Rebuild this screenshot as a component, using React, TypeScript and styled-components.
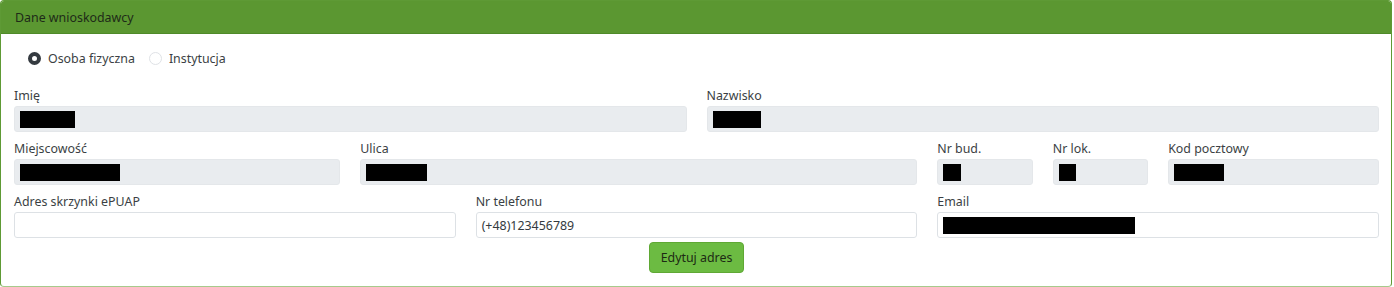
import styled, { createGlobalStyle } from 'styled-components'

const GlobalStyle = createGlobalStyle`
  html, body {
    margin: 0;
    padding: 0;
    background: #ffffff;
  }
  body {
    font-family: 'Noto Sans', 'Open Sans', sans-serif;
    font-size: 12.4px;
    color: #212529;
  }
`

const Card = styled.section`
  width: 1392px;
  height: 287px;
  box-sizing: border-box;
  border: 1px solid #5e9a35;
  border-bottom-color: #a6ca8c;
  border-radius: 4px;
  overflow: hidden;
  display: flex;
  flex-direction: column;
`

const Header = styled.div`
  height: 32px;
  flex: none;
  background: #5b9731;
  border-bottom: 1px solid #4f8a29;
  display: flex;
  align-items: center;
  padding: 0 14px;
  font-size: 12.4px;
  color: #1e2a18;
`

const Body = styled.div`
  padding: 13px 12px 0 13px;
  display: flex;
  flex-direction: column;
`

const RadioRow = styled.div`
  display: flex;
  align-items: center;
  gap: 14px;
  padding-left: 14px;
  height: 22px;
  margin-bottom: 19px;
`

const RadioLabel = styled.label`
  display: flex;
  align-items: center;
  gap: 7px;
  color: #3b3f44;
`

const RadioDot = styled.span<{ $checked?: boolean }>`
  width: 13px;
  height: 13px;
  box-sizing: border-box;
  border-radius: 50%;
  border: ${({ $checked }) => ($checked ? '4px solid #343a40' : '1px solid #dfe2e6')};
  background: #ffffff;
`

const Grid = styled.div`
  display: grid;
  grid-template-columns: repeat(12, 1fr);
  column-gap: 20px;
  row-gap: 9px;
`

const Field = styled.div<{ $span: number }>`
  grid-column: span ${({ $span }) => $span};
  display: flex;
  flex-direction: column;
`

const Label = styled.span`
  line-height: 16px;
  color: #3b3f44;
  margin-bottom: 2px;
`

const Input = styled.div<{ $disabled?: boolean }>`
  height: 26px;
  box-sizing: border-box;
  border: 1px solid ${({ $disabled }) => ($disabled ? '#e4e7ea' : '#dde1e5')};
  border-radius: 3px;
  background: ${({ $disabled }) => ($disabled ? '#e9ecef' : '#ffffff')};
  display: flex;
  align-items: center;
  padding: 0 7px 0 5px;
  color: #343a40;
`

const Redacted = styled.span<{ $w: number }>`
  display: block;
  width: ${({ $w }) => $w}px;
  height: 17px;
  background: #000000;
`

const Actions = styled.div`
  display: flex;
  justify-content: center;
  padding-top: 4px;
`

const Button = styled.button`
  width: 95px;
  height: 31px;
  box-sizing: border-box;
  border: 1px solid #5fa834;
  border-radius: 4px;
  background: #6cbb42;
  color: #1d2a14;
  font-family: inherit;
  font-size: 12.4px;
  cursor: pointer;
`

type FieldDef = {
  label: string
  span: number
  disabled?: boolean
  hidden?: number
  value?: string
}

const fields: FieldDef[] = [
  { label: 'Imię', span: 6, disabled: true, hidden: 55 },
  { label: 'Nazwisko', span: 6, disabled: true, hidden: 48 },
  { label: 'Miejscowość', span: 3, disabled: true, hidden: 100 },
  { label: 'Ulica', span: 5, disabled: true, hidden: 61 },
  { label: 'Nr bud.', span: 1, disabled: true, hidden: 18 },
  { label: 'Nr lok.', span: 1, disabled: true, hidden: 17 },
  { label: 'Kod pocztowy', span: 2, disabled: true, hidden: 50 },
  { label: 'Adres skrzynki ePUAP', span: 4 },
  { label: 'Nr telefonu', span: 4, value: '(+48)123456789' },
  { label: 'Email', span: 4, hidden: 192 },
]

export default function App() {
  return (
    <>
      <GlobalStyle />
      <Card>
        <Header>Dane wnioskodawcy</Header>
        <Body>
          <RadioRow>
            <RadioLabel>
              <RadioDot $checked />
              Osoba fizyczna
            </RadioLabel>
            <RadioLabel>
              <RadioDot />
              Instytucja
            </RadioLabel>
          </RadioRow>
          <Grid>
            {fields.map((f) => (
              <Field key={f.label} $span={f.span}>
                <Label>{f.label}</Label>
                <Input $disabled={f.disabled}>
                  {f.hidden ? <Redacted $w={f.hidden} /> : f.value}
                </Input>
              </Field>
            ))}
          </Grid>
          <Actions>
            <Button type="button">Edytuj adres</Button>
          </Actions>
        </Body>
      </Card>
    </>
  )
}
